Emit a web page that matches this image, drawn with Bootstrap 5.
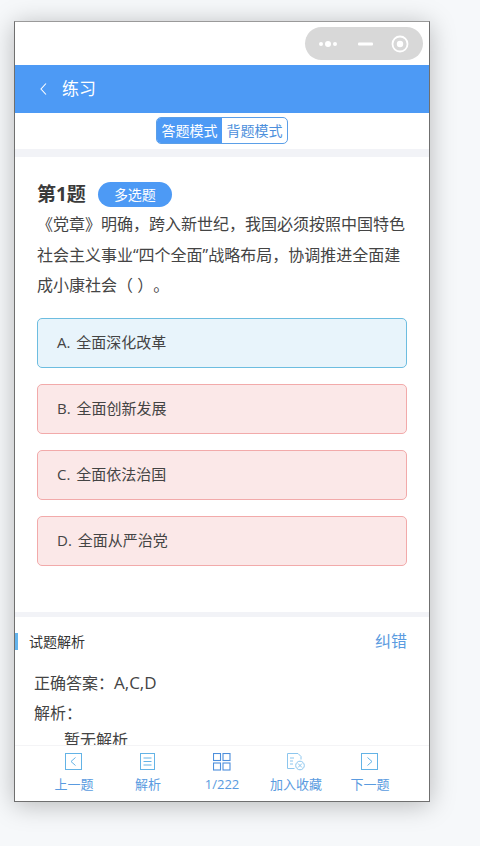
<!DOCTYPE html>
<html lang="zh-CN">
<head>
<meta charset="utf-8">
<title>练习</title>
<link href="https://cdn.jsdelivr.net/npm/bootstrap@5.3.0/dist/css/bootstrap.min.css" rel="stylesheet">
<style>
html,body{height:100%;}
body{background:#f6f8fa;font-family:"Open Sans","Noto Sans CJK SC",sans-serif;color:#333;overflow:hidden;padding:21px 0 0 14px;text-spacing-trim:space-all;}
.phone{width:416px;height:781px;background:#fff;border:1px solid #6f6f6f;border-top-color:#9a9a9a;box-shadow:0 3px 24px rgba(0,0,0,.26);overflow:hidden;position:relative;}
.statusbar{height:43px;padding:5px 6px 0 0;}
.capsule{width:118px;height:33px;border-radius:17px;background:#d8d8d8;padding:0 14px 0 13px;}
.topbar{height:48px;background:#4d9af5;color:#fff;padding-left:24px;font-size:17px;gap:14px;}
.modes{height:36px;padding-top:4px;}
.seg{width:132px;height:27px;border:1px solid #5b9fe8;border-radius:5px;overflow:hidden;font-size:14px;line-height:25px;text-align:center;}
.seg-on{width:65px;background:#4d9af5;color:#fff;}
.seg-off{flex:1;color:#4d8fdc;}
.band1{height:8px;background:#f2f3f7;}
.band2{height:5px;background:#f2f3f7;margin-top:46px;}
.qbody{padding:25px 22px 0;}
.qhead{height:25px;gap:12px;}
.qno{font-size:19px;font-weight:700;color:#3a3a3a;line-height:25px;}
.qtype{width:74px;height:25px;border-radius:13px;background:#4d9af5;color:#fff;font-size:14px;line-height:25px;text-align:center;}
.qtext{font-size:16px;line-height:30.5px;color:#444;margin-top:2px;margin-bottom:17px;}
.opts{gap:16px;}
.opt{height:50px;border:1px solid;border-radius:5px;padding-left:19px;font-size:15px;color:#444;word-spacing:2px;}
.opt-a{background:#e8f4fb;border-color:#6dbde0;}
.opt-w{background:#fbe8e8;border-color:#f2aaaa;}
.anahead{height:49px;padding-right:22px;}
.anatitle{border-left:3px solid #63b3ec;padding-left:11px;font-size:14px;line-height:17px;color:#333;}
.fix{font-size:16px;color:#5a9be0;}
.ana{padding-left:19px;font-size:16px;color:#444;position:relative;}
.ana-l1{line-height:24px;margin-top:5px;}
.ana-lat{font-size:17px;}
.ana-l2{line-height:24px;margin-top:6px;}
.ana-l3{line-height:24px;padding-left:30px;margin-top:3px;}
.tabbar{position:absolute;left:0;right:0;bottom:0;height:56px;background:#fff;border-top:1px solid #f4f4f6;padding:7px 22px 0 22px;}
.tab{width:74px;font-size:13px;line-height:18px;color:#5a9be0;text-align:center;}
.tab svg{display:block;margin:0 auto 4px;}
</style>
</head>
<body>
<div class="phone">
  <div class="statusbar d-flex justify-content-end">
    <div class="capsule d-flex align-items-center justify-content-between">
      <svg width="21" height="10" viewBox="0 0 21 10"><circle cx="3" cy="5" r="2" fill="#fff"/><circle cx="10" cy="5" r="3" fill="#fff"/><circle cx="17" cy="5" r="2" fill="#fff"/></svg>
      <svg width="15" height="4" viewBox="0 0 15 4"><rect width="15" height="3" y=".5" rx="1" fill="#fff"/></svg>
      <svg width="18" height="18" viewBox="0 0 18 18"><circle cx="9" cy="9" r="7.5" fill="none" stroke="#fff" stroke-width="1.8"/><circle cx="9" cy="9" r="3.2" fill="#fff"/></svg>
    </div>
  </div>
  <div class="topbar d-flex align-items-center">
    <svg width="9" height="14" viewBox="0 0 9 14"><path d="M7 1.5 2 7l5 5.5" fill="none" stroke="#fff" stroke-width="1.1"/></svg>
    <span>练习</span>
  </div>
  <div class="modes d-flex justify-content-center">
    <div class="seg d-flex"><div class="seg-on">答题模式</div><div class="seg-off">背题模式</div></div>
  </div>
  <div class="band1"></div>
  <div class="qbody">
    <div class="qhead d-flex align-items-center"><span class="qno">第1题</span><span class="qtype">多选题</span></div>
    <div class="qtext">《党章》明确，跨入新世纪，我国必须按照中国特色社会主义事业“四个全面”战略布局，协调推进全面建成小康社会（ ）。</div>
    <div class="opts d-flex flex-column">
      <div class="opt opt-a d-flex align-items-center">A. 全面深化改革</div>
      <div class="opt opt-w d-flex align-items-center">B. 全面创新发展</div>
      <div class="opt opt-w d-flex align-items-center">C. 全面依法治国</div>
      <div class="opt opt-w d-flex align-items-center">D. 全面从严治党</div>
    </div>
  </div>
  <div class="band2"></div>
  <div class="anahead d-flex align-items-center justify-content-between">
    <div class="anatitle">试题解析</div>
    <div class="fix">纠错</div>
  </div>
  <div class="ana">
    <div class="ana-l1">正确答案：<span class="ana-lat">A,C,D</span></div>
    <div class="ana-l2">解析：</div>
    <div class="ana-l3">暂无解析</div>
  </div>
  <div class="tabbar d-flex justify-content-between">
    <div class="tab"><svg width="18" height="18" viewBox="0 0 18 18" fill="none" stroke="#63b3e6"><rect x=".5" y=".5" width="16" height="16"/><path d="M10.5 4.5 6 8.5l4.5 4"/></svg>上一题</div>
    <div class="tab"><svg width="18" height="18" viewBox="0 0 18 18" fill="none" stroke="#63b3e6"><rect x="1.5" y=".5" width="14" height="16"/><path d="M4.5 5h8M4.5 8.5h8M4.5 12h8"/></svg>解析</div>
    <div class="tab"><svg width="18" height="18" viewBox="0 0 18 18" fill="none" stroke="#4d8fdc" stroke-width="1.1"><rect x=".5" y=".5" width="7" height="7"/><rect x="10" y=".5" width="7" height="7"/><rect x=".5" y="10" width="7" height="7"/><rect x="10" y="10" width="7" height="7"/></svg>1/222</div>
    <div class="tab"><svg width="18" height="18" viewBox="0 0 18 18" fill="none" stroke="#8cc6ee"><path d="M11 .5H.5v15h7M11 .5l3 3v3"/><path d="M3 5h4M3 8h3M3 11h3"/><circle cx="13" cy="12.5" r="4.3"/><path d="m11 10.5 4 4m0-4-4 4"/></svg>加入收藏</div>
    <div class="tab"><svg width="18" height="18" viewBox="0 0 18 18" fill="none" stroke="#63b3e6"><rect x=".5" y=".5" width="16" height="16"/><path d="m6.5 4.5 4.5 4-4.5 4"/></svg>下一题</div>
  </div>
</div>
</body>
</html>
